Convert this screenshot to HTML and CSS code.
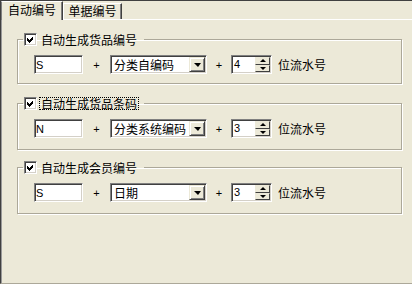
FILE: index.html
```html
<!DOCTYPE html>
<html lang="zh-CN">

<head>
    <meta charset="UTF-8">
    <meta name="viewport" content="width=device-width, initial-scale=1.0">
    <title>自动编号</title>
    <link rel="stylesheet" href="styles.css">
</head>

<body>

    <div class="ventana">
        <div class="pestanas">
            <div class="pestana activa">自动编号</div>
            <div class="pestana">单据编号</div>
        </div>

        <div class="panel">

            <fieldset class="grupo primero">
                <legend>
                    <span class="titulo">
                        <span class="casilla"><svg width="7" height="7" viewBox="0 0 7 7"><polygon points="0,2 2,4 6,0 6,3 2,7 0,5" /></svg></span>
                        <span class="etiqueta">自动生成货品编号</span>
                    </span>
                </legend>
                <div class="fila">
                    <div class="campo texto">S</div>
                    <span class="mas">+</span>
                    <div class="campo combo">
                        <span class="valor">分类自编码</span>
                        <span class="boton-baja"><span class="flecha-abajo"></span></span>
                    </div>
                    <span class="mas corto">+</span>
                    <div class="campo giro">
                        <span class="valor num">4</span>
                        <span class="botones-giro">
                            <span class="mini"><span class="flecha-arriba"></span></span>
                            <span class="mini"><span class="flecha-abajo chica"></span></span>
                        </span>
                    </div>
                    <span class="unidad">位流水号</span>
                </div>
            </fieldset>

            <fieldset class="grupo">
                <legend>
                    <span class="titulo">
                        <span class="casilla"><svg width="7" height="7" viewBox="0 0 7 7"><polygon points="0,2 2,4 6,0 6,3 2,7 0,5" /></svg></span>
                        <span class="etiqueta foco">自动生成货品条码</span>
                    </span>
                </legend>
                <div class="fila">
                    <div class="campo texto">N</div>
                    <span class="mas">+</span>
                    <div class="campo combo">
                        <span class="valor">分类系统编码</span>
                        <span class="boton-baja"><span class="flecha-abajo"></span></span>
                    </div>
                    <span class="mas corto">+</span>
                    <div class="campo giro">
                        <span class="valor num">3</span>
                        <span class="botones-giro">
                            <span class="mini"><span class="flecha-arriba"></span></span>
                            <span class="mini"><span class="flecha-abajo chica"></span></span>
                        </span>
                    </div>
                    <span class="unidad">位流水号</span>
                </div>
            </fieldset>

            <fieldset class="grupo">
                <legend>
                    <span class="titulo">
                        <span class="casilla"><svg width="7" height="7" viewBox="0 0 7 7"><polygon points="0,2 2,4 6,0 6,3 2,7 0,5" /></svg></span>
                        <span class="etiqueta">自动生成会员编号</span>
                    </span>
                </legend>
                <div class="fila">
                    <div class="campo texto">S</div>
                    <span class="mas">+</span>
                    <div class="campo combo">
                        <span class="valor">日期</span>
                        <span class="boton-baja"><span class="flecha-abajo"></span></span>
                    </div>
                    <span class="mas corto">+</span>
                    <div class="campo giro">
                        <span class="valor num">3</span>
                        <span class="botones-giro">
                            <span class="mini"><span class="flecha-arriba"></span></span>
                            <span class="mini"><span class="flecha-abajo chica"></span></span>
                        </span>
                    </div>
                    <span class="unidad">位流水号</span>
                </div>
            </fieldset>

        </div>
    </div>

</body>

</html>
```

FILE: styles.css
```css
body {
    margin: 0;
    font-family: "Noto Sans CJK SC", sans-serif;
    font-size: 12px;
    color: #000;
    background-color: #ece9d8;
}

.ventana {
    width: 412px;
    height: 284px;
    box-sizing: border-box;
    background-color: #ece9d8;
    border-top: 1px solid #404040;
    border-left: 1px solid #404040;
    border-bottom: 1px solid #aca899;
    display: flex;
    flex-direction: column;
}

.pestanas {
    display: flex;
    align-items: flex-end;
    height: 18px;
    position: relative;
    z-index: 1;
}

.pestana {
    box-sizing: border-box;
    height: 16px;
    width: 59px;
    line-height: 14px;
    text-align: center;
    border-top: 1px solid #fff;
    border-left: 1px solid #fff;
    border-right: 1px solid #404040;
    box-shadow: inset -1px 0 0 #808080;
    background-color: #ece9d8;
}

.pestana.activa {
    height: 19px;
    width: 62px;
    line-height: 16px;
    margin-bottom: -1px;
    border-left-color: #808080;
}

.panel {
    flex: 1;
    border-top: 1px solid #fff;
    border-left: 1px solid #999;
    padding: 13px 0 0 15px;
}

.grupo {
    width: 385px;
    box-sizing: border-box;
    margin: 0 0 11px 0;
    padding: 9px 0 11px 5px;
    border: 1px solid #aca899;
    box-shadow: 1px 1px 0 #fff, inset 1px 1px 0 #fff;
}

.grupo.primero {
    padding-bottom: 9px;
    margin-bottom: 13px;
}

legend {
    padding: 0 5px 0 1px;
}

.titulo {
    display: flex;
    align-items: center;
    gap: 2px;
    height: 13px;
}

.casilla {
    width: 13px;
    height: 13px;
    box-sizing: border-box;
    border: 1px solid;
    border-color: #808080 #fff #fff #808080;
    box-shadow: inset 1px 1px 0 #404040, inset -1px -1px 0 #d4d0c8;
    background-color: #fff;
    display: flex;
    align-items: center;
    justify-content: center;
}

.casilla svg {
    display: block;
    shape-rendering: crispEdges;
}

.etiqueta {
    padding: 0 1px;
    border: 1px solid transparent;
    line-height: 11px;
}

.etiqueta.foco {
    border: 1px dotted #000;
}

.fila {
    display: flex;
    align-items: center;
    height: 19px;
    margin-left: 11px;
}

.campo {
    box-sizing: border-box;
    height: 19px;
    padding: 1px;
    background-color: #fff;
    border: 1px solid;
    border-color: #808080 #fff #fff #808080;
    box-shadow: inset 1px 1px 0 #404040, inset -1px -1px 0 #d4d0c8;
    display: flex;
    align-items: center;
}

.campo.texto {
    width: 49px;
    padding-left: 1px;
    font-family: "Liberation Sans", sans-serif;
    font-size: 11px;
}

.mas {
    width: 27px;
    text-align: center;
    font-family: "Liberation Sans", sans-serif;
    font-size: 11px;
}

.mas.corto {
    width: 24px;
}

.combo {
    width: 97px;
}

.valor {
    flex: 1;
    padding-left: 2px;
    line-height: 15px;
}

.valor.num {
    font-family: "Liberation Sans", sans-serif;
    font-size: 11px;
    padding-left: 1px;
}

.boton-baja {
    width: 16px;
    height: 15px;
    box-sizing: border-box;
    background-color: #ece9d8;
    border: 1px solid;
    border-color: #ece9d8 #404040 #404040 #ece9d8;
    box-shadow: inset 1px 1px 0 #fff, inset -1px -1px 0 #808080;
    display: flex;
    align-items: center;
    justify-content: center;
}

.flecha-abajo {
    width: 0;
    height: 0;
    border-left: 4px solid transparent;
    border-right: 3px solid transparent;
    border-top: 4px solid #000;
}

.flecha-abajo.chica {
    border-left-width: 3px;
    border-top-width: 3px;
}

.flecha-arriba {
    width: 0;
    height: 0;
    border-left: 3px solid transparent;
    border-right: 3px solid transparent;
    border-bottom: 3px solid #000;
}

.giro {
    width: 41px;
}

.botones-giro {
    width: 15px;
    height: 15px;
    display: flex;
    flex-direction: column;
}

.mini {
    flex: 1;
    box-sizing: border-box;
    background-color: #ece9d8;
    border: 1px solid;
    border-color: #ece9d8 #404040 #404040 #ece9d8;
    display: flex;
    align-items: center;
    justify-content: center;
}

.unidad {
    margin-left: 6px;
}
```
